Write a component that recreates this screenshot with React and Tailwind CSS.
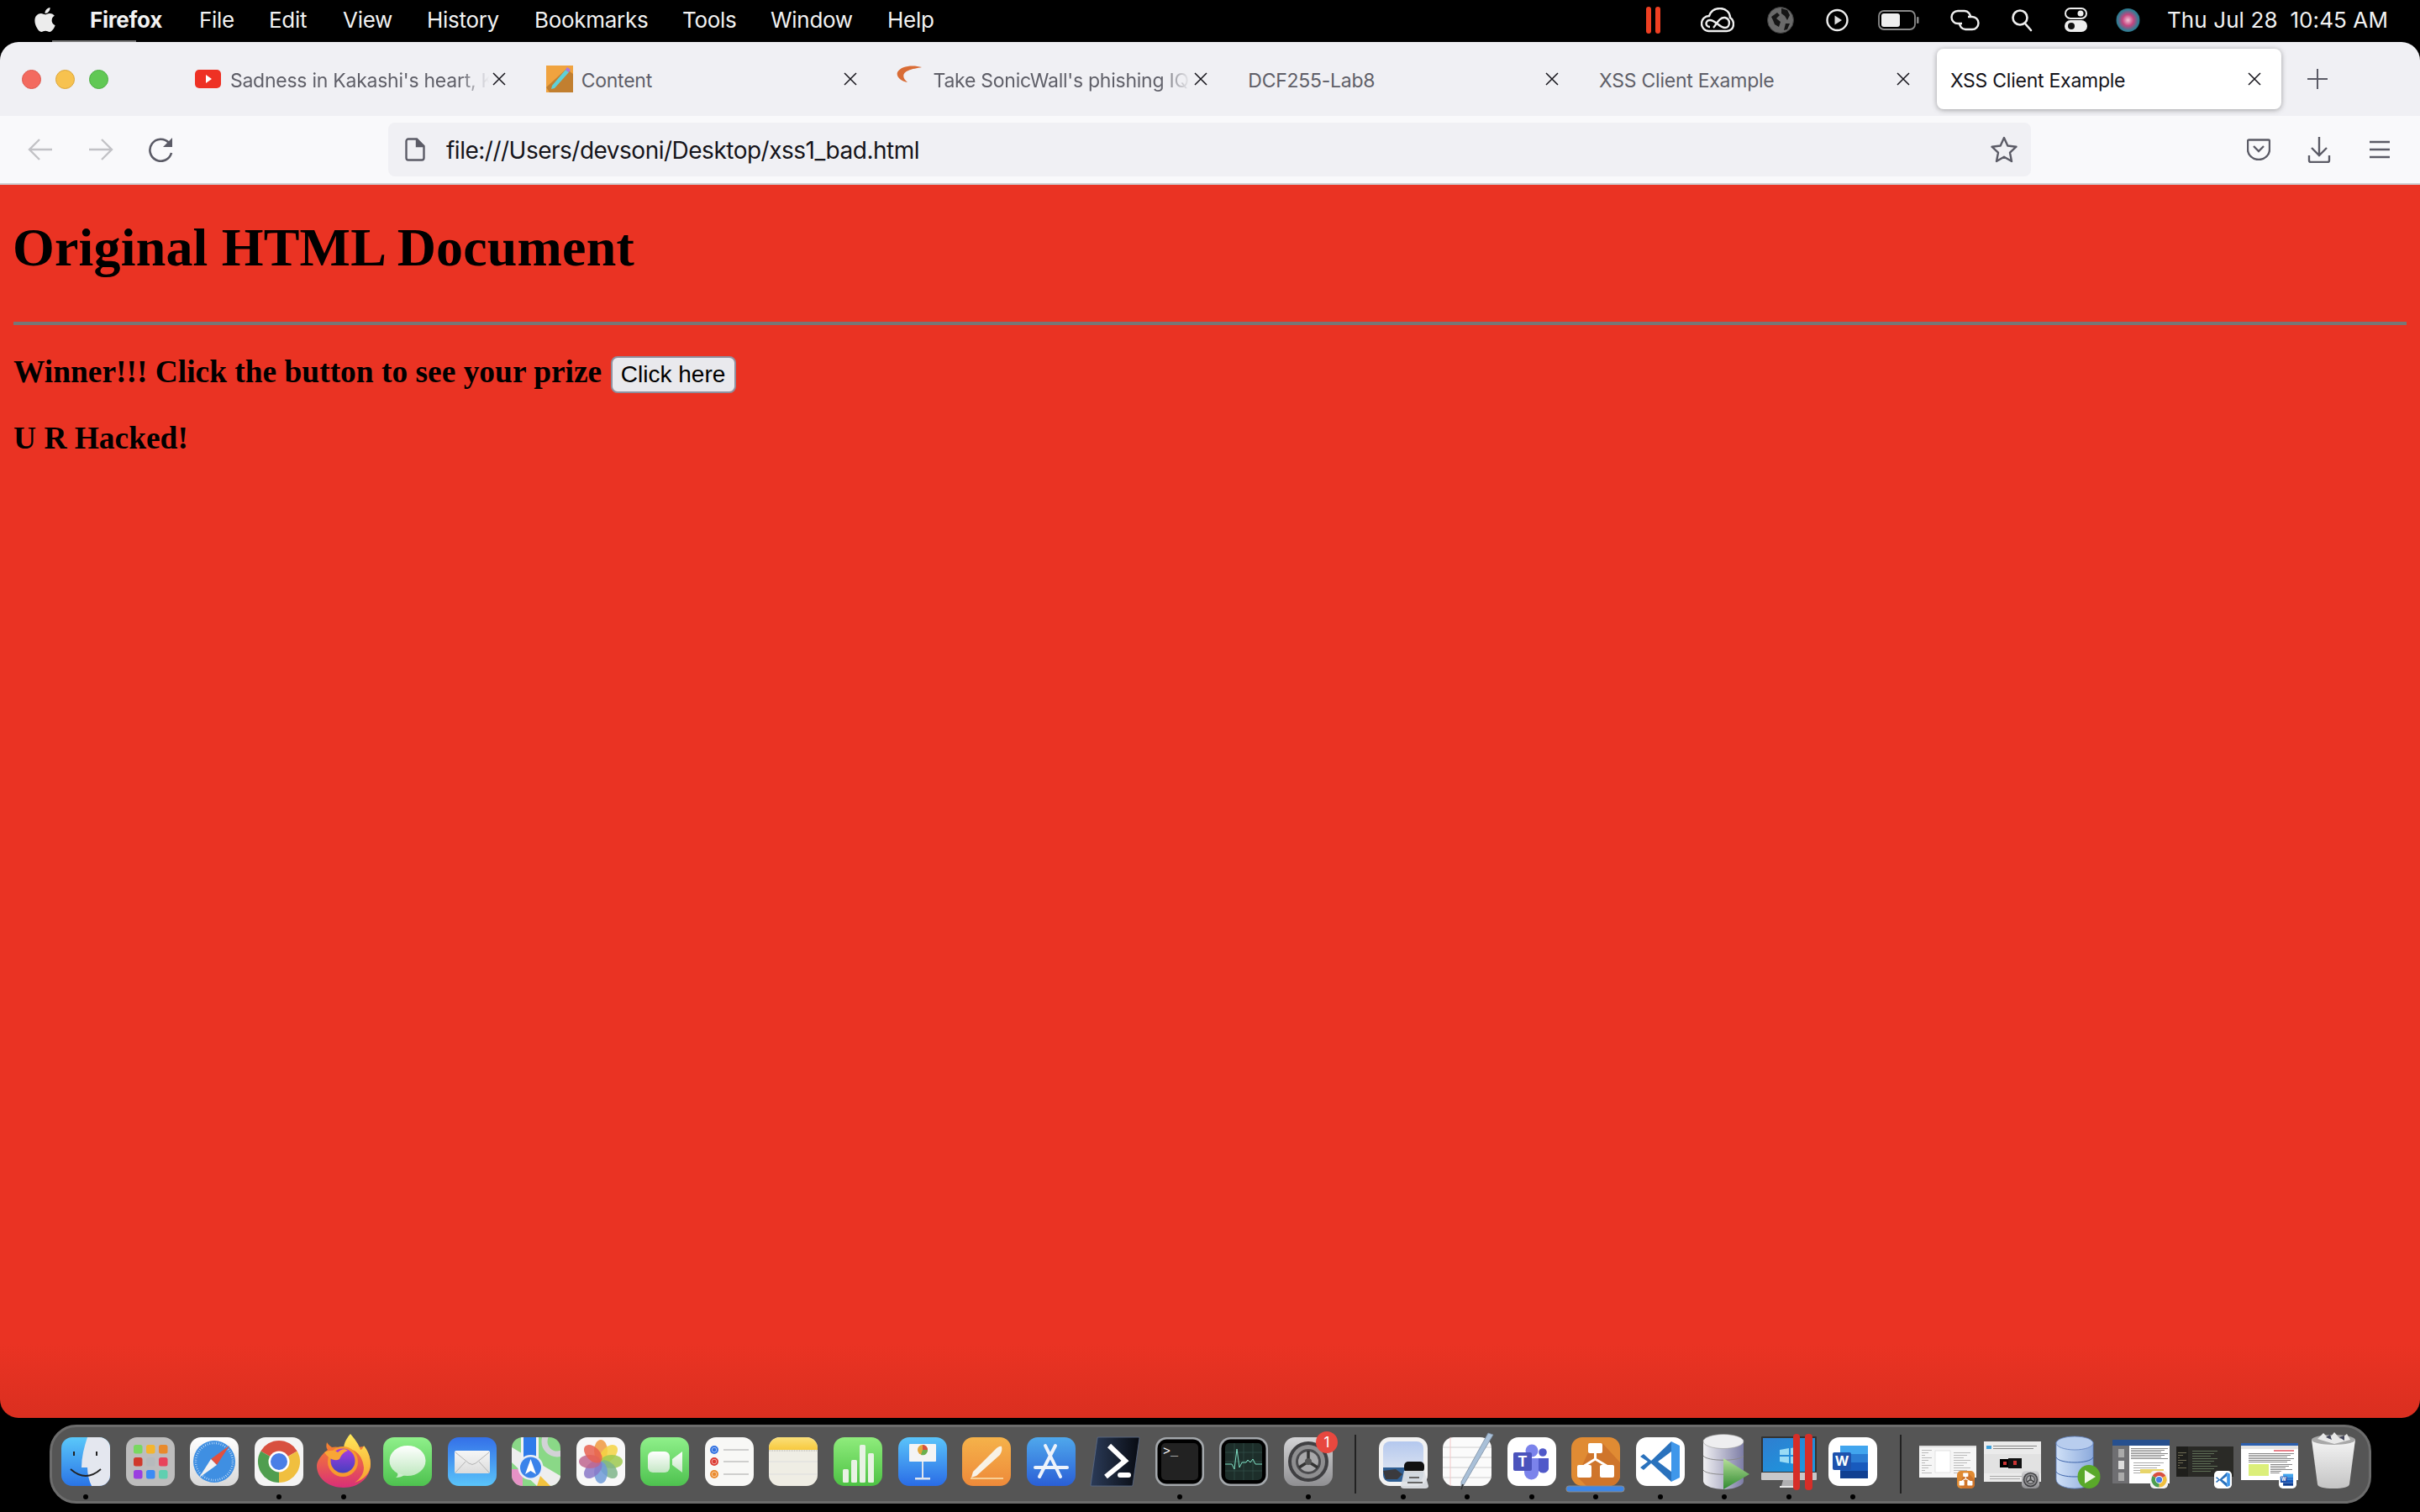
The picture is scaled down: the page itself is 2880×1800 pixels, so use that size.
import React from "react";
import { FaApple } from "react-icons/fa";

const G = ({ id, a, b, x2 = 0, y2 = 1 }) => (
  <defs>
    <linearGradient id={id} x1="0" y1="0" x2={x2} y2={y2}>
      <stop offset="0" stopColor={a} />
      <stop offset="1" stopColor={b} />
    </linearGradient>
  </defs>
);
const Sq = ({ fill }) => <rect width="58" height="58" rx="13" fill={fill} />;

const Finder = () => (<>
  <G id="fb" a="#5ac8fa" b="#2a74e6" />
  <Sq fill="url(#fb)" />
  <path d="M31 0C27 12 24 24 24 36H31C31 44 33 52 36 58H45A13 13 0 0 0 58 45V13A13 13 0 0 0 45 0Z" fill="#e4e7ef" />
  <path d="M15 17V22M42 17V22" stroke="#222" strokeWidth="2" />
  <path d="M11 38Q29 54 47 38" stroke="#222" strokeWidth="1.8" fill="none" />
</>);
const Launchpad = () => {
  const c = ["#79d860", "#f4b52d", "#e98a2c", "#d0392b", "#b6babc", "#e8435b", "#9a3ee0", "#3a8bf5", "#5fcfb0"];
  return (<>
    <Sq fill="#bdbdbd" />
    {c.map((f, i) => <rect key={i} x={9 + (i % 3) * 15} y={9 + Math.floor(i / 3) * 15} width="10.5" height="10.5" rx="2.5" fill={f} />)}
  </>);
};
const Safari = () => (<>
  <G id="sf" a="#ffffff" b="#d8d8d8" />
  <Sq fill="url(#sf)" />
  <circle cx="29" cy="29" r="25" fill="#3f8fe2" />
  <circle cx="29" cy="29" r="22" fill="none" stroke="#cfe3f7" strokeWidth="2.5" strokeDasharray="0.7 2" />
  <path d="M47 10L25 26L32 33Z" fill="#e2503f" />
  <path d="M11 48L25 26L32 33Z" fill="#f2f2f2" />
</>);
const Chrome = () => (<>
  <Sq fill="#f4f4f4" />
  <path d="M29 29L7.3 16.5A25 25 0 0 1 50.7 16.5Z" fill="#d8503f" />
  <path d="M29 29L50.7 16.5A25 25 0 0 1 29 54Z" fill="#f0bf3f" />
  <path d="M29 29L29 54A25 25 0 0 1 7.3 16.5Z" fill="#4f9e4f" />
  <circle cx="29" cy="29" r="12.5" fill="#fff" />
  <circle cx="29" cy="29" r="10" fill="#4a7fe6" />
</>);
const Firefox = () => (<>
  <G id="ff1" a="#f8862b" b="#d92e78" />
  <G id="ff2" a="#ffe95a" b="#f7a02e" />
  <G id="ff3" a="#a93be0" b="#4540bf" />
  <path d="M9 6C8 10 8 13 10 15C3 20-3 28-3 34C-3 49 11 60 29 60C47 60 61 48 61 32C61 24 58 17 53 11L30 14C24 11 18 11 15 12C12 10 10 8 9 6Z" fill="url(#ff1)" />
  <path d="M37-4C31 3 28 10 30 14C42 12 52 22 53 36C53 44 48 50 42 54C54 50 61 42 61 32C61 24 58 16 53 10C52 13 50 15 49 15C47 8 42 2 37-4Z" fill="url(#ff2)" />
  <circle cx="28" cy="29" r="18" fill="#f79a2e" />
  <circle cx="28" cy="28" r="14.5" fill="url(#ff3)" />
  <path d="M6 18C12 15 18 15 22 18C26 14 30 13 34 16C28 18 26 22 24 26C18 30 10 24 6 18Z" fill="#f8a636" />
</>);
const Messages = () => (<>
  <G id="ms" a="#8ff08a" b="#4ec24f" />
  <G id="ms2" a="#ffffff" b="#bfe8bf" />
  <Sq fill="url(#ms)" />
  <ellipse cx="29" cy="28" rx="21.5" ry="18" fill="url(#ms2)" />
  <path d="M17 42C18 45 17 47 15 48C19 48 23 47 25 45Z" fill="#cfeccf" />
</>);
const Mail = () => (<>
  <G id="ml" a="#3470e8" b="#5ac4fa" />
  <G id="ml2" a="#f6f6f6" b="#dcdcdc" />
  <Sq fill="url(#ml)" />
  <rect x="8" y="16" width="42" height="27" rx="2" fill="url(#ml2)" />
  <path d="M9 18L25 31Q29 34 33 31L49 18M9 42L21 29M49 42L37 29" stroke="#b5b5b5" strokeWidth="1" fill="none" />
</>);
const Maps = () => (<>
  <defs><clipPath id="mp"><rect width="58" height="58" rx="13" /></clipPath></defs>
  <g clipPath="url(#mp)">
    <rect width="58" height="58" fill="#8ad887" />
    <circle cx="54" cy="5" r="15" fill="none" stroke="#d2d2d6" strokeWidth="7" />
    <path d="M0 12L58 46V58H30L0 30Z" fill="#eee" />
    <rect y="38" width="13" height="20" fill="#e692c6" />
    <path d="M30 58L34 46L46 58Z" fill="#f2c33f" />
    <rect x="11" width="21" height="30" fill="#f2f2f2" />
    <rect x="14" width="15" height="28" fill="#2f7bea" />
  </g>
  <circle cx="22.5" cy="36" r="15" fill="#e9eef6" />
  <circle cx="22.5" cy="36" r="12.5" fill="#3b83ea" />
  <path d="M22.5 26L29 44L22.5 40L16 44Z" fill="#fff" />
</>);
const Photos = () => {
  const c = ["#f0993f", "#f5d443", "#9ec94f", "#7fb58a", "#6f9bd8", "#8a78c8", "#c0668f", "#e8604f"];
  return (<>
    <Sq fill="#f8f8f8" />
    {c.map((f, i) => <ellipse key={i} cx="29" cy="16" rx="8" ry="13" fill={f} opacity="0.85" transform={`rotate(${i * 45} 29 29)`} />)}
  </>);
};
const FaceTime = () => (<>
  <G id="ft" a="#8ff08a" b="#4ec24f" />
  <G id="ft2" a="#ffffff" b="#c5e6c5" />
  <Sq fill="url(#ft)" />
  <rect x="9" y="17" width="26" height="25" rx="6" fill="url(#ft2)" />
  <path d="M38 26L50 17V42L38 33Z" fill="url(#ft2)" />
</>);
const Reminders = () => (<>
  <Sq fill="#f8f8f6" />
  {[[15, "#2f6fe0"], [29, "#dc3b32"], [44, "#ea8a2c"]].map(([y, f]) => (
    <g key={y}>
      <circle cx="11" cy={y} r="5" fill={f} />
      <circle cx="11" cy={y} r="2.8" fill="none" stroke="#fff" strokeWidth="0.8" opacity="0.7" />
      <path d={`M22 ${y}H52`} stroke="#b5b5b5" strokeWidth="1.2" />
    </g>
  ))}
</>);
const Notes = () => (<>
  <G id="nt" a="#fbe07a" b="#f7c93e" />
  <Sq fill="#efede4" />
  <path d="M0 15V13A13 13 0 0 1 13 0H45A13 13 0 0 1 58 13V15Z" fill="url(#nt)" />
  <path d="M0 16H58" stroke="#aaa" strokeWidth="1" strokeDasharray="1 1" />
  <path d="M0 29H58M0 44H58" stroke="#ddd" strokeWidth="1.2" />
</>);
const Numbers = () => (<>
  <G id="nm" a="#8fec7c" b="#4dc244" />
  <Sq fill="url(#nm)" />
  <rect x="11" y="38" width="7" height="16" rx="1.5" fill="#e8f2e4" />
  <rect x="21" y="27" width="7" height="27" rx="1.5" fill="#e8f2e4" />
  <rect x="31" y="9" width="7" height="45" rx="1.5" fill="#e8f2e4" />
  <rect x="41" y="19" width="7" height="35" rx="1.5" fill="#e8f2e4" />
</>);
const Keynote = () => (<>
  <G id="kn" a="#5ac4fa" b="#2a6ce6" />
  <Sq fill="url(#kn)" />
  <rect x="13" y="8" width="32" height="21" rx="1" fill="#f4f4f4" />
  <circle cx="29" cy="15" r="6" fill="#e0a63c" />
  <path d="M29 15V9A6 6 0 0 1 35 15Z" fill="#d8503f" />
  <path d="M29 15H35A6 6 0 0 1 27 21Z" fill="#6ab04f" />
  <path d="M29 29V49" stroke="#dfe5ee" strokeWidth="2" />
  <rect x="20" y="48" width="18" height="2.5" fill="#dfe5ee" />
</>);
const Pages = () => (<>
  <G id="pg" a="#f5b24a" b="#ee8a3a" />
  <Sq fill="url(#pg)" />
  <path d="M47 11C48 14 47 18 45 21L17 46L11 48L13 41L40 14C42 12 45 10 47 11Z" fill="#f8f2e6" />
  <rect x="10" y="48" width="39" height="2" fill="#f8cf94" />
</>);
const AppStore = () => (<>
  <G id="as" a="#4fa8ec" b="#2a5fd6" />
  <Sq fill="url(#as)" />
  <path d="M22 10L40 47M34 10L15 47M10 36H48" stroke="#edf3fb" strokeWidth="4" strokeLinecap="round" />
</>);
const PowerShell = () => (<>
  <G id="ps" a="#2b3b58" b="#080b12" x2={1} y2={0} />
  <path d="M9 0H57Q58 0 58 1L50 57Q50 58 49 58H1Q0 58 0 57L8 1Q8 0 9 0Z" fill="url(#ps)" stroke="#5a6c8c" strokeWidth="0.8" />
  <path d="M22 10L41 28L18 47" stroke="#fff" strokeWidth="6" fill="none" />
  <rect x="32" y="42" width="16" height="6" rx="3" fill="#fff" />
</>);
const Terminal = () => (<>
  <rect width="58" height="58" rx="13" fill="#a3a7ab" />
  <rect x="2.5" y="2.5" width="53" height="53" rx="11" fill="#000" />
  <rect x="7" y="7" width="44" height="44" rx="5" fill="#222" />
  <text x="9" y="21" fill="#fff" fontSize="15" fontFamily="'Liberation Mono',monospace">{">_"}</text>
</>);
const Activity = () => (<>
  <rect width="58" height="58" rx="13" fill="#a3a7ab" />
  <rect x="2.5" y="2.5" width="53" height="53" rx="11" fill="#000" />
  <rect x="7" y="7" width="44" height="44" rx="5" fill="#1d2e2a" />
  <path d="M7 18H51M7 29H51M7 40H51M18 7V51M29 7V51M40 7V51" stroke="#34504a" strokeWidth="0.7" />
  <path d="M7 32H15L18 38L21 14L24 36L27 30H32L34 27L37 30L40 26L43 32H51" stroke="#7fe0c4" strokeWidth="1" fill="none" />
</>);
const Gear = ({ badge }) => (<>
  <G id="gr" a="#d4d4d6" b="#8f8f92" />
  <Sq fill="url(#gr)" />
  <circle cx="29" cy="29" r="24" fill="#3f3f42" />
  <circle cx="29" cy="29" r="20" fill="#8e8e90" />
  <circle cx="29" cy="29" r="15" fill="#4a4a4d" />
  <circle cx="29" cy="29" r="12" fill="#a8a8aa" />
  <path d="M29 29V16M29 29L18 36M29 29L40 36" stroke="#333" strokeWidth="3.5" />
  <circle cx="29" cy="29" r="4" fill="#555" />
  {badge && (<>
    <circle cx="51" cy="6" r="13" fill="#e8483f" />
    <text x="51" y="12" textAnchor="middle" fill="#fff" fontSize="17" fontFamily="Inter,sans-serif">1</text>
  </>)}
</>);
const Preview = () => (<>
  <G id="pv" a="#b4c8ee" b="#e8ecf2" />
  <Sq fill="#f2f2f2" />
  <rect x="5" y="5" width="48" height="48" rx="8" fill="url(#pv)" />
  <path d="M5 36H53V45A8 8 0 0 1 45 53H13A8 8 0 0 1 5 45Z" fill="#2f5f94" />
  <path d="M5 40L20 38L28 44L22 50H8Z" fill="#3a3a3e" />
  <rect x="30" y="29" width="24" height="13" rx="5" fill="#111" />
  <path d="M30 40H54L59 58Q59 61 55 61H30Q26 61 26 58Z" fill="#dfe2e6" opacity="0.93" />
  <path d="M36 48H48M34 54H52" stroke="#666" strokeWidth="2" />
</>);
const TextEdit = () => (<>
  <Sq fill="#fbfbfb" />
  <path d="M0 12H58M0 24H58M0 36H58M0 48H58" stroke="#cfcfcf" strokeWidth="1.2" />
  <path d="M9 0V58" stroke="#f4c8c8" strokeWidth="1" />
  <path d="M54-5L60-3L26 55L22 62L22 53Z" fill="#a9c0d8" stroke="#7c8ea2" strokeWidth="0.8" />
  <path d="M22 62L24 56" stroke="#333" strokeWidth="2" />
</>);
const Teams = () => (<>
  <Sq fill="#fff" />
  <circle cx="42" cy="18" r="4.8" fill="#5059c9" />
  <path d="M37 25H49V38A7 7 0 0 1 37 40Z" fill="#5059c9" />
  <circle cx="29" cy="16" r="7.5" fill="#7b83eb" />
  <path d="M20 25H37V42A8.5 8.5 0 0 1 20 42Z" fill="#7b83eb" />
  <rect x="7" y="18" width="22" height="22" rx="2" fill="#4b53bc" />
  <text x="18" y="35" textAnchor="middle" fill="#fff" fontSize="17" fontWeight="700" fontFamily="Inter,sans-serif">T</text>
</>);
const Drawio = ({ bar }) => (<>
  <Sq fill="#e08b33" />
  <path d="M37 7L58 30V45A13 13 0 0 1 45 58H18L7 47L20 18Z" fill="#cf752b" />
  <path d="M28.5 18V26L15.5 34M28.5 26L42 34" stroke="#fff" strokeWidth="3" fill="none" />
  <rect x="20" y="7" width="17" height="12" rx="2" fill="#fff" />
  <rect x="7" y="33" width="17" height="15" rx="2" fill="#fff" />
  <rect x="34" y="33" width="17" height="15" rx="2" fill="#fff" />
  {bar && <rect x="-6" y="58" width="69" height="7" rx="3" fill="#3f87e5" stroke="#8a8a8a" strokeWidth="1" />}
</>);
const VSCode = () => (<>
  <Sq fill="#fff" />
  <path d="M42 5L18 28L9 20L5 23L14 29L5 36L9 39L18 31L42 53V41L26 29L42 17Z" fill="#2a72bd" />
  <path d="M42 5L52 10V48L42 53Z" fill="#3f97ea" />
</>);
const Sql = () => (<>
  <G id="sq" a="#f0f0f2" b="#7d7da6" x2={1} y2={0} />
  <G id="sq2" a="#b8e09a" b="#2f8a30" />
  <path d="M4 3V52C4 58 16 62 28 62C40 62 52 58 52 52V3Z" fill="url(#sq)" />
  <ellipse cx="28" cy="5" rx="24" ry="8.5" fill="#eeeef0" stroke="#999" strokeWidth="0.6" />
  <path d="M4 22C8 29 48 29 52 22M4 39C8 46 48 46 52 39" stroke="#8b8b8b" strokeWidth="1" fill="none" />
  <path d="M28 25L59 44L28 62Z" fill="url(#sq2)" />
</>);
const Parallels = () => (<>
  <G id="pl" a="#2f7ed0" b="#1a9ae0" x2={1} y2={1} />
  <rect x="-4" y="-1" width="66" height="43" rx="1" fill="#333" />
  <rect x="-2" y="1" width="62" height="40" fill="url(#pl)" />
  <path d="M18 15L29 13V21H18ZM31 13L42 11V21H31ZM18 23H29V31L18 29ZM31 23H42V33L31 31Z" fill="#9adcf5" />
  <rect x="-4" y="42" width="66" height="9" rx="1" fill="#c8c8ca" />
  <path d="M22 51H36L38 58H20Z" fill="#b0b0b2" />
  <rect x="18" y="58" width="22" height="2" fill="#e8e8e8" />
  <rect x="34" y="-4" width="8" height="67" rx="4" fill="#d62e28" />
  <rect x="48" y="-4" width="9" height="67" rx="4" fill="#d62e28" />
</>);
const Word = () => (<>
  <Sq fill="#fff" />
  <rect x="14" y="10" width="33" height="10" fill="#41a5ee" />
  <rect x="14" y="20" width="33" height="10" fill="#2b7cd3" />
  <rect x="14" y="30" width="33" height="10" fill="#185abd" />
  <rect x="14" y="40" width="33" height="9" fill="#103f91" />
  <rect x="5" y="18" width="22" height="21" rx="2" fill="#1e52ad" />
  <text x="16" y="34" textAnchor="middle" fill="#fff" fontSize="16" fontWeight="700" fontFamily="Inter,sans-serif">W</text>
</>);
const Mini = ({ x, y, C, s = 21 }) => (
  <svg x={x} y={y} width={s} height={s} viewBox="0 0 58 58"><C /></svg>
);
const Rows = ({ x, y, w, n, gap = 3, c = "#bbb" }) => (
  <>{Array.from({ length: n }).map((_, i) => <rect key={i} x={x} y={y + i * gap} width={w - (i % 3) * 4} height="1" fill={c} />)}</>
);
const T1 = () => (<g transform="translate(12 0)">
  <rect x="-17" y="10" width="68" height="38" fill="#f6f6f6" />
  <rect x="-17" y="10" width="68" height="2" fill="#ddd" />
  <Rows x={-14} y={15} w={12} n={10} />
  <rect x="2" y="16" width="18" height="26" fill="#fff" stroke="#ccc" strokeWidth="0.5" />
  <Rows x={24} y={18} w={20} n={9} />
  <Mini x={28} y={40} C={() => <Drawio />} />
</g>);
const T2 = () => (<g transform="translate(12 0)">
  <rect x="-17" y="5" width="68" height="48" fill="#ebebeb" />
  <rect x="-14" y="10" width="6" height="4" fill="#3ca0dc" />
  <Rows x={-6} y={10} w={52} n={2} c="#888" />
  <rect x="-17" y="20" width="68" height="23" fill="#e2e2e2" />
  <rect x="2" y="26" width="12" height="10" fill="#000" />
  <rect x="12" y="25" width="16" height="12" fill="#111" />
  <rect x="6" y="29" width="4" height="4" fill="#c33" />
  <rect x="18" y="28" width="4" height="5" fill="#c33" />
  <Rows x={-10} y={46} w={40} n={2} c="#aaa" />
  <Mini x={28} y={40} C={() => <Gear />} />
</g>);
const Db = () => (<>
  <G id="db" a="#cfe0f7" b="#8caadc" x2={1} y2={0} />
  <path d="M5 6V50C5 57 16 61 27 61C38 61 49 57 49 50V6Z" fill="url(#db)" stroke="#5f82c0" strokeWidth="0.8" />
  <ellipse cx="27" cy="7" rx="22" ry="8" fill="#b8cdee" stroke="#5f82c0" strokeWidth="0.8" />
  <path d="M5 24C9 32 45 32 49 24M5 41C9 49 45 49 49 41" stroke="#3f65ab" strokeWidth="1" fill="none" />
  <ellipse cx="44" cy="47" rx="13.5" ry="14" fill="#5aa92a" />
  <path d="M39 39L52 47L39 55Z" fill="#f0f8e8" />
</>);
const T4 = () => (<g transform="translate(12 0)">
  <rect x="-17" y="3" width="68" height="52" fill="#fff" />
  <rect x="-17" y="3" width="68" height="7" fill="#27508f" />
  <rect x="-17" y="10" width="20" height="45" fill="#6f6f72" />
  <rect x="-10" y="14" width="7" height="10" fill="#aaa" />
  <rect x="-10" y="28" width="7" height="10" fill="#ddd" />
  <rect x="-10" y="42" width="7" height="10" fill="#aaa" />
  <Rows x={5} y={13} w={44} n={7} c="#888" gap={2} />
  <Rows x={8} y={30} w={36} n={5} c="#aaa" />
  <rect x="16" y="38" width="28" height="5" fill="#e8d56a" />
  <Mini x={28} y={40} C={() => <Chrome />} />
</g>);
const T5 = () => (<g transform="translate(12 0)">
  <rect x="-17" y="11" width="68" height="36" fill="#2a2a26" />
  <rect x="-17" y="11" width="14" height="36" fill="#1f1f1c" />
  <Rows x={-15} y={18} w={10} n={7} c="#6e6a52" gap={3} />
  <Rows x={2} y={16} w={30} n={9} c="#5e6e56" gap={3} />
  <Mini x={28} y={40} C={() => <VSCode />} />
</g>);
const T6 = () => (<g transform="translate(12 0)">
  <rect x="-17" y="7" width="68" height="44" fill="#fff" />
  <rect x="-17" y="7" width="68" height="3" fill="#2b5fae" />
  <rect x="-17" y="10" width="68" height="4" fill="#e4e4e4" />
  <rect x="22" y="15" width="24" height="2" fill="#e8808a" />
  <Rows x={-8} y={19} w={54} n={6} c="#888" gap={2} />
  <rect x="-8" y="32" width="24" height="14" fill="#dcef7a" />
  <Rows x={18} y={32} w={26} n={6} c="#888" gap={2} />
  <Mini x={28} y={40} C={() => <Word />} />
</g>);
const Trash = () => (<>
  <G id="tr" a="#f4f4f4" b="#c4c4c4" />
  <path d="M3 3L10 56Q11 61 29 61Q47 61 48 56L55 3Z" fill="url(#tr)" />
  <ellipse cx="29" cy="3" rx="26" ry="6" fill="#a8a8a8" />
  <path d="M10 2L17-5L24 2L30-6L37 2L45-4L49 3L30 8Z" fill="#e8e8e8" />
  <path d="M20 0L25-3L27 3ZM36 0L42-2L42 4Z" fill="#44465a" />
</>);

const Dot = ({ on }) => <div className={`mt-[10px] h-[6px] w-[6px] rounded-full ${on ? "bg-black" : "bg-transparent"}`} />;
const Slot = ({ I, dot }) => (
  <div className="flex w-[76.57px] shrink-0 flex-col items-center pt-[12px]">
    <svg viewBox="0 0 58 58" width="58" height="58" className="shrink-0 overflow-visible">{I}</svg>
    <Dot on={dot} />
  </div>
);
const Sep = () => (
  <div className="flex w-[36px] shrink-0 justify-center pt-[9px]">
    <div className="h-[70px] w-[2px] bg-[#222]" />
  </div>
);

const group1 = [[<Finder />, 1], [<Launchpad />], [<Safari />], [<Chrome />, 1], [<Firefox />, 1], [<Messages />], [<Mail />], [<Maps />], [<Photos />], [<FaceTime />], [<Reminders />], [<Notes />], [<Numbers />], [<Keynote />], [<Pages />], [<AppStore />], [<PowerShell />], [<Terminal />, 1], [<Activity />], [<Gear badge />, 1]];
const group2 = [[<Preview />, 1], [<TextEdit />, 1], [<Teams />, 1], [<Drawio bar />, 1], [<VSCode />, 1], [<Sql />, 1], [<Parallels />, 1], [<Word />, 1]];
const group3 = [[<T1 />], [<T2 />], [<Db />], [<T4 />], [<T5 />], [<T6 />], [<Trash />]];

const CloseX = () => (
  <svg viewBox="0 0 16 16" width="16" height="16" className="shrink-0">
    <path d="M1 1L15 15M15 1L1 15" stroke="#15141a" strokeWidth="1.5" />
  </svg>
);
const Yt = () => (
  <svg viewBox="0 0 31 22" width="31" height="22" className="mr-[11px] shrink-0">
    <rect width="31" height="22" rx="5" fill="#ee3124" />
    <path d="M13 6L20 11L13 16Z" fill="#fff" />
  </svg>
);
const Pencil = () => (
  <svg viewBox="0 0 32 32" width="32" height="32" className="mr-[10px] shrink-0">
    <rect width="32" height="32" fill="#f0a33f" />
    <path d="M0 26L24 4L32 10V32H4Z" fill="#c27f2f" />
    <path d="M7 24L23 5L27 8L10 27L6 28Z" fill="#5fd0d8" />
    <path d="M23 5L25 2L29 5L27 8Z" fill="#a878e0" />
  </svg>
);
const Swoosh = () => (
  <svg viewBox="0 0 31 32" width="31" height="32" className="mr-[12px] shrink-0">
    <path d="M30 2C20-1 5 0 1 8C-1 14 6 19 13 20C7 15 6 9 14 6C18 4 25 3 30 2Z" fill="#d96c35" />
  </svg>
);

const Tab = ({ icon, title, active, fade }) => (
  <div className="flex w-[417.8px] shrink-0 justify-center">
    <div className={`flex h-[72px] w-[410px] items-center rounded-[8px] pl-[16px] pr-[24px] ${active ? "bg-white shadow-[0_1px_6px_rgba(0,0,0,0.35)]" : ""}`}>
      {icon}
      <div className={`mr-[4px] flex-1 overflow-hidden whitespace-nowrap pt-[3px] text-[23px] leading-[30px] tracking-[-0.25px] ${active ? "text-[#15141a]" : "text-[#5f5f68]"} ${fade ? "[mask-image:linear-gradient(to_right,black_calc(100%-36px),transparent)]" : ""}`}>
        {title}
      </div>
      <CloseX />
    </div>
  </div>
);

const Menu = ({ w, children, b }) => (
  <div className={`shrink-0 ${w} ${b ? "font-bold" : ""}`}>{children}</div>
);

export default function App() {
  return (
    <div className="relative flex h-[1800px] w-[2880px] flex-col overflow-hidden bg-black font-['Inter','Liberation_Sans',sans-serif]">
      {/* menu bar */}
      <div className="flex h-[50px] shrink-0 items-center pb-[3px] pl-[39px] pr-[38px] text-[26px] tracking-[-0.3px] text-[#f2f2f2]">
        <FaApple className="mb-[1px] mr-[39px] h-[33px] w-[29px] shrink-0 text-[#ececec]" />
        <Menu b w="w-[130px]">Firefox</Menu>
        <Menu w="w-[83px]">File</Menu>
        <Menu w="w-[88px]">Edit</Menu>
        <Menu w="w-[100px]">View</Menu>
        <Menu w="w-[128px]">History</Menu>
        <Menu w="w-[176px]">Bookmarks</Menu>
        <Menu w="w-[105px]">Tools</Menu>
        <Menu w="w-[139px]">Window</Menu>
        <Menu w="w-[60px]">Help</Menu>
        <div className="ml-auto flex items-center">
          <svg width="18" height="32" viewBox="0 0 18 32"><rect width="6" height="32" rx="3" fill="#ee3f22" /><rect x="11" width="6" height="32" rx="3" fill="#ee3f22" /></svg>
          <svg className="ml-[47px]" width="40" height="30" viewBox="0 0 40 30" fill="none" stroke="#eee" strokeWidth="2.4">
            <path d="M10 28C4 28 1 23 1 19C1 14 5 10 10 10C12 4 17 1 23 1C30 1 35 6 35 12C38 14 39 17 39 20C39 25 35 28 31 28Z" />
            <path d="M11 23C5 23 5 15 11 15C18 15 22 24 29 24C35 24 36 14 29 12C22 11 19 20 15 24" />
          </svg>
          <svg className="ml-[39px]" width="32" height="32" viewBox="0 0 32 32">
            <circle cx="16" cy="16" r="15.5" fill="#6a6a6a" stroke="#3a3a3a" strokeWidth="1" />
            <path d="M5 12L12 7L15 10L11 14L16 18L14 24L9 21L7 16ZM17 2L24 4L27 10L24 16L21 11L17 8ZM22 20L27 20L24 27L20 28Z" fill="#161616" />
          </svg>
          <svg className="ml-[38px]" width="27" height="28" viewBox="0 0 27 28">
            <circle cx="13.5" cy="14" r="12" fill="none" stroke="#eee" strokeWidth="2.4" />
            <path d="M10.5 8.5L19 14L10.5 19.5Z" fill="#ddd" />
          </svg>
          <svg className="ml-[35px]" width="49" height="24" viewBox="0 0 49 24">
            <rect x="1" y="1" width="43" height="22" rx="6" fill="none" stroke="#8a8a8a" strokeWidth="1.8" />
            <rect x="4" y="4" width="22" height="16" rx="3" fill="#eee" />
            <rect x="46" y="8" width="2.5" height="8" rx="1" fill="#8a8a8a" />
          </svg>
          <svg className="ml-[37px]" width="35" height="30" viewBox="0 0 35 30" fill="none" stroke="#eee" strokeWidth="2.4">
            <path d="M14 19H9A7.5 7.5 0 0 1 9 4H17A7.5 7.5 0 0 1 24 12" />
            <path d="M21 11H26A7.5 7.5 0 0 1 26 26H18A7.5 7.5 0 0 1 11 18" />
          </svg>
          <svg className="ml-[37px]" width="26" height="28" viewBox="0 0 26 28" fill="none" stroke="#eee" strokeWidth="2.6">
            <circle cx="11" cy="11" r="8.5" />
            <path d="M17 18L24 26" strokeLinecap="round" />
          </svg>
          <svg className="ml-[38px]" width="27" height="30" viewBox="0 0 27 30">
            <rect x="1" y="1" width="25" height="12" rx="6" fill="none" stroke="#eee" strokeWidth="2" />
            <circle cx="19" cy="7" r="3.5" fill="#eee" />
            <rect y="15" width="27" height="14" rx="7" fill="#eee" />
            <circle cx="8" cy="22" r="4" fill="#111" />
          </svg>
          <svg className="ml-[34px]" width="29" height="28" viewBox="0 0 29 28">
            <defs>
              <radialGradient id="si" cx="0.5" cy="0.5" r="0.6">
                <stop offset="0" stopColor="#f4c4d8" />
                <stop offset="0.4" stopColor="#c2457f" />
                <stop offset="0.75" stopColor="#2f7f95" />
                <stop offset="1" stopColor="#2a4a5a" />
              </radialGradient>
            </defs>
            <circle cx="14.5" cy="14" r="14" fill="url(#si)" />
          </svg>
          <div className="ml-[32px] whitespace-nowrap tracking-[0.1px]">Thu Jul 28&nbsp;&nbsp;10:45 AM</div>
        </div>
      </div>
      <div className="absolute left-[62px] top-[48px] h-[2px] w-[100px] bg-[#777]" />

      {/* browser window */}
      <div className="flex h-[1638px] shrink-0 flex-col overflow-hidden rounded-[22px]">
        <div className="flex h-[88px] shrink-0 items-center bg-[#f0f0f4] pl-[26px]">
          <div className="flex gap-[17px]">
            <div className="h-[23px] w-[23px] rounded-full border border-[#dd5a50] bg-[#f36a5f]" />
            <div className="h-[23px] w-[23px] rounded-full border border-[#dba63c] bg-[#f7c24f]" />
            <div className="h-[23px] w-[23px] rounded-full border border-[#4fae46] bg-[#61c854]" />
          </div>
          <div className="ml-[83px] flex items-center">
            <Tab icon={<Yt />} title="Sadness in Kakashi's heart, Kakashi's theme" fade />
            <Tab icon={<Pencil />} title="Content" />
            <Tab icon={<Swoosh />} title="Take SonicWall's phishing IQ test" fade />
            <Tab title="DCF255-Lab8" />
            <Tab title="XSS Client Example" />
            <Tab title="XSS Client Example" active />
            <svg className="ml-[26px] shrink-0" width="26" height="26" viewBox="0 0 26 26">
              <path d="M13 1V25M1 13H25" stroke="#5b5b66" strokeWidth="2" />
            </svg>
          </div>
        </div>
        <div className="flex h-[80px] shrink-0 items-center bg-[#f9f9fb] pl-[12px] pr-[12px]">
          <div className="flex w-[72px] justify-center">
            <svg width="30" height="30" viewBox="0 0 30 30" fill="none" stroke="#c2c2c6" strokeWidth="2.4"><path d="M29 15H2M14 3L2 15L14 27" /></svg>
          </div>
          <div className="flex w-[72px] justify-center">
            <svg width="30" height="30" viewBox="0 0 30 30" fill="none" stroke="#c2c2c6" strokeWidth="2.4"><path d="M1 15H28M16 3L28 15L16 27" /></svg>
          </div>
          <div className="flex w-[72px] justify-center">
            <svg width="30" height="30" viewBox="0 0 30 30" fill="none"><path d="M24 7A13 13 0 1 0 27 19" stroke="#5b5b66" strokeWidth="2.6" /><path d="M28 1V12H17Z" fill="#5b5b66" /></svg>
          </div>
          <div className="ml-[234px] flex h-[64px] w-[1955px] shrink-0 items-center rounded-[8px] bg-[#f0f0f4] pl-[20px] pr-[16px]">
            <svg width="24" height="28" viewBox="0 0 24 28" fill="none" stroke="#5b5b66" strokeWidth="2.4">
              <path d="M4 1.5H14L22.5 10V24A2.5 2.5 0 0 1 20 26.5H4A2.5 2.5 0 0 1 1.5 24V4A2.5 2.5 0 0 1 4 1.5Z" />
              <path d="M14 1V10H23" fill="#5b5b66" />
            </svg>
            <div className="ml-[25px] pt-[1px] text-[28px] tracking-[-0.5px] text-[#15141a]">file:///Users/devsoni/Desktop/xss1_bad.html</div>
            <svg className="ml-auto" width="32" height="32" viewBox="0 0 32 32" fill="none" stroke="#5b5b66" strokeWidth="2.4" strokeLinejoin="round">
              <path d="M16 2L20.3 11.5L30.5 12.7L23 19.7L25 30L16 24.8L7 30L9 19.7L1.5 12.7L11.7 11.5Z" />
            </svg>
          </div>
          <div className="ml-[235px] flex w-[72px] justify-center">
            <svg width="28" height="26" viewBox="0 0 28 26" fill="none" stroke="#5b5b66" strokeWidth="2.4">
              <path d="M2.5 1.5H25.5A1.5 1.5 0 0 1 27 3V13A13 12 0 0 1 1 13V3A1.5 1.5 0 0 1 2.5 1.5Z" />
              <path d="M8 9L14 15L20 9" />
            </svg>
          </div>
          <div className="flex w-[72px] justify-center">
            <svg width="28" height="32" viewBox="0 0 28 32" fill="none" stroke="#5b5b66" strokeWidth="2.4">
              <path d="M14 1V22M5 14L14 23L23 14M2 23V29A2 2 0 0 0 4 31H24A2 2 0 0 0 26 29V23" />
            </svg>
          </div>
          <div className="flex w-[72px] justify-center">
            <svg width="24" height="22" viewBox="0 0 24 22" stroke="#5b5b66" strokeWidth="2.4"><path d="M0 2H24M0 11H24M0 20H24" /></svg>
          </div>
        </div>
        <div className="h-[2px] shrink-0 bg-[#cfcfd3]" />
        <main className="flex-1 bg-[linear-gradient(to_bottom,#ea3323_0,#ea3323_94%,#da2f20_100%)] px-[16px] pt-[38px] font-['Liberation_Serif',serif] text-black">
          <h1 className="-ml-px text-[64px] font-bold leading-[74px] tracking-[0.18px]">Original HTML Document</h1>
          <hr className="mt-[51px] h-[4px] border-0 bg-[#777]" />
          <h3 className="mt-[34px] text-[37.44px] font-bold leading-[44px]">
            Winner!!! Click the button to see your prize{" "}
            <button className="ml-[1px] h-[44px] w-[149px] rounded-[8px] border-2 border-[#8f8f9d] bg-[#e9e9ed] font-['Liberation_Sans',sans-serif] text-[28px] font-normal leading-[30px]">Click here</button>
          </h3>
          <h3 className="mt-[32px] text-[37.44px] font-bold leading-[44px]">U R Hacked!</h3>
        </main>
      </div>

      {/* dock */}
      <div className="ml-[59px] mt-[8px] flex h-[94px] w-[2763px] shrink-0 rounded-[32px] border-[3px] border-[#6c6c6c] bg-[#555] pl-[2px]">
        {group1.map(([I, d], i) => <Slot key={i} I={I} dot={d} />)}
        <Sep />
        {group2.map(([I, d], i) => <Slot key={i} I={I} dot={d} />)}
        <Sep />
        {group3.map(([I, d], i) => <Slot key={i} I={I} dot={d} />)}
      </div>
    </div>
  );
}
